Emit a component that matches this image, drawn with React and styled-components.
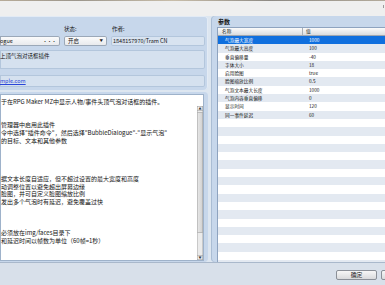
import React from "react";
import styled, { createGlobalStyle } from "styled-components";

const Global = createGlobalStyle`
  html, body { margin: 0; padding: 0; }
  body {
    background: #efefef;
    font-family: "Noto Sans CJK SC", "Noto Sans", sans-serif;
    color: #1b1b1b;
  }
`;

const Frame = styled.div`
  width: 385px;
  height: 285px;
  overflow: hidden;
  display: flex;
  flex-direction: column;
  background: #efefef;
`;

const PhotoEdge = styled.div`
  height: 1px;
  flex: none;
  background: linear-gradient(90deg, #b7ab98 0%, #9c968c 20%, #c8bda9 45%, #8e8a84 70%, #b3aa9b 100%);
`;

const TitleStrip = styled.div`
  height: 15px;
  flex: none;
  box-sizing: border-box;
  display: flex;
  justify-content: flex-end;
  align-items: flex-start;
  padding: 4px 1px 0 0;
  background: #efefef;
`;

const CornerMark = styled.span`
  width: 1px;
  height: 3px;
  background: #9a9a9a;
`;

const Body = styled.div`
  height: 246px;
  flex: none;
  display: flex;
  gap: 3px;
  background: #dde6f0;
`;

const LeftColumn = styled.div`
  width: 208px;
  flex: none;
  display: flex;
  flex-direction: column;
  gap: 2px;
`;

const InfoPanel = styled.section`
  height: 74px;
  flex: none;
  box-sizing: border-box;
  padding: 10px 3px 3px 0;
  background: #c7d7eb;
  border-radius: 0 4px 4px 0;
  box-shadow: inset -1px 0 0 #e3ebf5, inset 0 1px 0 #e3ebf5;
  display: flex;
  flex-direction: column;
  font-size: 5.5px;
  color: #141414;
`;

const FieldGrid = styled.div`
  display: grid;
  grid-template-columns: 60px 43px 94px;
  column-gap: 4px;
  height: ${(p) => p.$h}px;
  margin-top: ${(p) => p.$mt || 0}px;
  line-height: ${(p) => p.$h}px;
`;

const FieldLabel = styled.span`
  padding-left: ${(p) => p.$pl || 0}px;
`;

const Combo = styled.div`
  display: flex;
  align-items: center;
  justify-content: space-between;
  box-sizing: border-box;
  padding: 0 ${(p) => p.$pr}px 0 ${(p) => p.$pl}px;
  background: linear-gradient(#fdfdfd, #e6e8eb);
  box-shadow: inset 0 0 0 1px #9ba8b8;
  border-radius: ${(p) => (p.$cut ? "0 2px 2px 0" : "2px")};
  white-space: nowrap;
  overflow: hidden;
`;

const Dots = styled.span`
  font-size: 5px;
  letter-spacing: -0.5px;
  color: #333;
`;

const Arrow = styled.span`
  font-size: 3.5px;
  color: #222;
`;

const TextField = styled.div`
  box-sizing: border-box;
  padding-left: 2px;
  background: #d8e3f0;
  box-shadow: inset 0 0 0 1px #b3c6dc;
  border-radius: 2px;
  white-space: nowrap;
  overflow: hidden;
`;

const DescBox = styled.div`
  margin-top: 4px;
  height: 19px;
  box-sizing: border-box;
  padding: 3px 0 0 0;
  line-height: 7px;
  background: #d5e1ef;
  box-shadow: inset 0 0 0 1px #b3c6dc;
  border-radius: 0 2px 2px 0;
  white-space: nowrap;
`;

const UrlBox = styled.div`
  margin-top: 6px;
  height: 12px;
  box-sizing: border-box;
  display: flex;
  align-items: center;
  background: #d5e1ef;
  box-shadow: inset 0 0 0 1px #b3c6dc;
  border-radius: 0 2px 2px 0;
`;

const Link = styled.a`
  color: #2a46d8;
  text-decoration: underline;
  text-underline-offset: 0.5px;
  text-decoration-thickness: 0.5px;
`;

const HelpPanel = styled.section`
  flex: 1;
  min-height: 0;
  box-sizing: border-box;
  padding: 2px 4px 1px 0;
  background: #c7d7eb;
  border-radius: 0 4px 4px 0;
  display: flex;
`;

const HelpArea = styled.div`
  flex: 1;
  display: flex;
  background: #ffffff;
  box-shadow: inset 0 0 0 1px #9eb2ca;
  overflow: hidden;
`;

const HelpText = styled.div`
  flex: 1;
  padding: 4px 0 0 1px;
  font-size: 6px;
  line-height: 7.7px;
  white-space: pre;
  overflow: hidden;
  color: #141414;
`;

const ScrollBar = styled.div`
  width: 6px;
  flex: none;
  margin: 12px 1px 1px 0;
  display: flex;
  flex-direction: column;
  background: #ebebeb;
  box-shadow: inset 0 0 0 1px #c9c9c9;
`;

const ScrollButton = styled.div`
  height: 5px;
  flex: none;
  display: flex;
  align-items: center;
  justify-content: center;
  font-size: 3px;
  color: #333;
  background: linear-gradient(90deg, #f6f6f6, #dcdcdc);
  box-shadow: inset 0 0 0 0.5px #9c9c9c;
`;

const ScrollTrack = styled.div`
  flex: 1;
  padding: 0.5px 0;
  display: flex;
  flex-direction: column;
`;

const ScrollThumb = styled.div`
  height: 121px;
  background: linear-gradient(90deg, #e9e9e9, #cfcfcf);
  box-shadow: inset 0 0 0 0.5px #9a9a9a;
  border-radius: 1px;
`;

const ParamPanel = styled.section`
  flex: 1;
  min-width: 0;
  box-sizing: border-box;
  padding: 2px 0 0 6px;
  background: #c7d7eb;
  border-radius: 4px 0 0 4px;
  box-shadow: inset 1px 0 0 #aabdd4;
  display: flex;
  flex-direction: column;
`;

const PanelTitle = styled.div`
  height: 8px;
  line-height: 8px;
  font-size: 6px;
  font-weight: 700;
  color: #141414;
  padding-left: 1px;
`;

const Table = styled.div`
  flex: 1;
  margin: 1px -12px 0 0;
  background: #ffffff;
  border: 1px solid #8ea3bf;
  border-bottom: none;
  overflow: hidden;
  font-size: 4.7px;
`;

const HeaderRow = styled.div`
  height: 8px;
  box-sizing: border-box;
  display: grid;
  grid-template-columns: 85px 1fr;
  line-height: 7px;
  background: linear-gradient(#fbfbfb, #d9dcdf);
  border-bottom: 1px solid #9ea6b0;
  color: #1a1a1a;
`;

const HeaderCell = styled.div`
  padding-left: ${(p) => p.$pl}px;
  border-right: ${(p) => (p.$divider ? "1px solid #a9b0b8" : "none")};
`;

const Row = styled.div`
  height: 8.3px;
  display: grid;
  grid-template-columns: 85px 1fr;
  line-height: 8.3px;
  background: ${(p) => (p.$selected ? "#0f6fde" : p.$alt ? "#e3e9f1" : "#ffffff")};
  color: ${(p) => (p.$selected ? "#ffffff" : "#141414")};
  white-space: nowrap;
`;

const Cell = styled.div`
  padding-left: ${(p) => p.$pl}px;
  overflow: hidden;
`;

const BottomBar = styled.div`
  height: 23px;
  flex: none;
  box-sizing: border-box;
  width: 425px;
  display: flex;
  justify-content: flex-end;
  align-items: flex-start;
  gap: 4px;
  padding: 7px 3px 0 0;
  background: #d8e0ea;
  border-top: 1px solid #a9b8cb;
`;

const Button = styled.button`
  width: 41px;
  height: 10px;
  box-sizing: border-box;
  padding: 0;
  margin: 0;
  font-family: "Noto Sans CJK SC", "Noto Sans", sans-serif;
  font-size: 5.8px;
  line-height: 8px;
  color: #1b1b1b;
  background: linear-gradient(#f7f7f7, #d9dadc);
  border: 1px solid #8b9098;
  border-radius: 2px;
`;

const helpLines = [
  "于在RPG Maker MZ中显示人物/事件头顶气泡对话框的插件。",
  "",
  "",
  "管理器中启用此插件",
  '令中选择"插件命令"，然后选择"BubbleDialogue"-"显示气泡"',
  "的目标、文本和其他参数",
  "",
  "",
  "",
  "",
  "据文本长度自适应，但不超过设置的最大宽度和高度",
  "动调整位置以避免超出屏幕边缘",
  "脸图，并可自定义脸图缩放比例",
  "发出多个气泡时有延迟，避免覆盖过快",
  "",
  "",
  "",
  "必须放在img/faces目录下",
  "和延迟时间以帧数为单位（60帧=1秒）",
];

const params = [
  ["气泡最大宽度", "1000"],
  ["气泡最大高度", "100"],
  ["垂直偏移量", "-40"],
  ["字体大小", "18"],
  ["启用脸图", "true"],
  ["脸图缩放比例", "0.5"],
  ["气泡文本最大长度", "1000"],
  ["气泡内容垂直偏移", "0"],
  ["显示时间", "120"],
  ["同一事件延迟", "60"],
];

const TOTAL_ROWS = 28;

export default function App() {
  const rows = Array.from({ length: TOTAL_ROWS }, (_, i) => params[i] || ["", ""]);
  return (
    <>
      <Global />
      <Frame>
        <PhotoEdge />
        <TitleStrip>
          <CornerMark />
        </TitleStrip>
        <Body>
          <LeftColumn>
            <InfoPanel>
              <FieldGrid $h={7}>
                <span />
                <FieldLabel>状态:</FieldLabel>
                <FieldLabel $pl={1}>作者:</FieldLabel>
              </FieldGrid>
              <FieldGrid $h={10} $mt={3}>
                <Combo $cut $pl={0} $pr={4}>
                  <span>ogue</span>
                  <Dots>···</Dots>
                </Combo>
                <Combo $pl={4} $pr={4}>
                  <span>开启</span>
                  <Arrow>▼</Arrow>
                </Combo>
                <TextField>1848157970/Tram CN</TextField>
              </FieldGrid>
              <DescBox>上顶气泡对话框插件</DescBox>
              <UrlBox>
                <Link>mple.com</Link>
              </UrlBox>
            </InfoPanel>
            <HelpPanel>
              <HelpArea>
                <HelpText>{helpLines.join("\n")}</HelpText>
                <ScrollBar>
                  <ScrollButton>▲</ScrollButton>
                  <ScrollTrack>
                    <ScrollThumb />
                  </ScrollTrack>
                  <ScrollButton>▼</ScrollButton>
                </ScrollBar>
              </HelpArea>
            </HelpPanel>
          </LeftColumn>
          <ParamPanel>
            <PanelTitle>参数</PanelTitle>
            <Table>
              <HeaderRow>
                <HeaderCell $pl={4} $divider>名称</HeaderCell>
                <HeaderCell $pl={3}>值</HeaderCell>
              </HeaderRow>
              {rows.map(([name, value], i) => (
                <Row key={i} $selected={i === 0} $alt={i % 2 === 1}>
                  <Cell $pl={7}>{name}</Cell>
                  <Cell $pl={6}>{value}</Cell>
                </Row>
              ))}
            </Table>
          </ParamPanel>
        </Body>
        <BottomBar>
          <Button>确定</Button>
          <Button aria-label="取消" />
        </BottomBar>
      </Frame>
    </>
  );
}
